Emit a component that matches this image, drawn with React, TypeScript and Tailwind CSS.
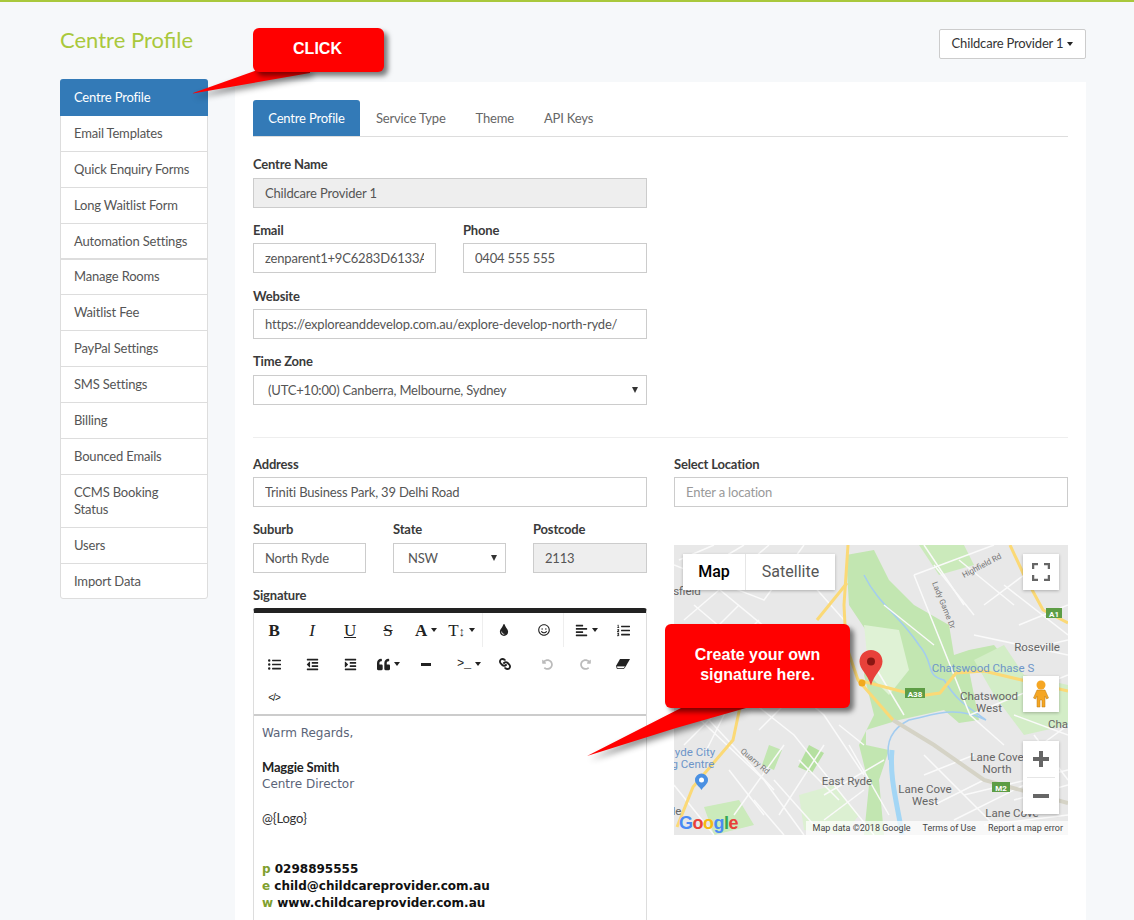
import { FaAlignLeft, FaIndent, FaLink, FaListOl, FaListUl, FaOutdent, FaQuoteLeft, FaRedoAlt, FaRegSmile, FaTint, FaUndoAlt } from "react-icons/fa";

const menuTop = ["Centre Profile", "Email Templates", "Quick Enquiry Forms", "Long Waitlist Form", "Automation Settings"];
const menuBottom = ["Manage Rooms", "Waitlist Fee", "PayPal Settings", "SMS Settings", "Billing", "Bounced Emails", "CCMS Booking Status", "Users", "Import Data"];

const Label = ({ children, low }: { children: string; low?: boolean }) => (
  <div className={`text-[13px] leading-[14px] font-bold text-[#3a3a3a] ${low ? "h-[15px] pt-[1px] mb-[6px]" : "h-[14px] mb-[7px]"}`}>{children}</div>
);

const Field = ({ value, disabled, placeholder }: { value?: string; disabled?: boolean; placeholder?: string }) => (
  <div className={`h-[30px] px-[11px] border border-[#ccc] text-[13px] leading-[28px] ${disabled ? "bg-[#eee]" : "bg-white"} ${placeholder ? "text-[#999]" : "text-[#555]"}`}>
    <div className="whitespace-nowrap overflow-hidden">{value || placeholder}</div>
  </div>
);

const Select = ({ value }: { value: string }) => (
  <div className="h-[30px] pl-[14px] pr-[8px] border border-[#ccc] bg-white text-[13px] leading-[28px] text-[#555] flex justify-between items-center">
    <span>{value}</span>
    <span className="w-0 h-0 border-x-[3.5px] border-x-transparent border-t-[6px] border-t-[#333]"></span>
  </div>
);

const Caret = () => <span className="w-0 h-0 border-x-[3.5px] border-x-transparent border-t-[4px] border-t-[#222] ml-[4px]"></span>;

const Tool = ({ children, caret, className = "w-[38px]" }: { children: React.ReactNode; caret?: boolean; className?: string }) => (
  <div className={`h-[34px] flex items-center justify-center text-[#222] ${className}`}>
    {children}
    {caret && <Caret />}
  </div>
);

const serif = "font-['Liberation_Serif',serif] text-[17px] leading-none";

const Toolbar = () => (
  <div className="h-[103px] px-[1px] border-b-2 border-[#ccc]">
    <div className="flex h-[34px]">
      <Tool><span className={`${serif} font-bold`}>B</span></Tool>
      <Tool><span className={`${serif} italic`}>I</span></Tool>
      <Tool><span className={`${serif} underline`}>U</span></Tool>
      <Tool><span className={`${serif} line-through`}>S</span></Tool>
      <Tool caret><span className={`${serif} font-bold`}>A</span></Tool>
      <Tool caret className="w-[38px] h-[30px] border-r border-[#eee] pr-[4px]"><span className={serif}>T<span className="text-[13px]">↕</span></span></Tool>
      <Tool className="w-[42px]"><FaTint size={12} /></Tool>
      <Tool className="w-[38px]"><FaRegSmile size={12} /></Tool>
      <Tool caret className="w-[46px] h-[30px] border-l border-[#eee]"><FaAlignLeft size={13} /></Tool>
      <Tool className="w-[28px]"><FaListOl size={13} /></Tool>
    </div>
    <div className="flex h-[34px]">
      <Tool><FaListUl size={13} /></Tool>
      <Tool><FaOutdent size={13} /></Tool>
      <Tool><FaIndent size={13} /></Tool>
      <Tool caret><FaQuoteLeft size={13} /></Tool>
      <Tool><span className="w-[10px] h-[3px] bg-[#222]"></span></Tool>
      <Tool caret className="w-[48px]"><span className="font-['Liberation_Mono',monospace] text-[12px] leading-none">&gt;_</span></Tool>
      <Tool className="w-[24px]"><FaLink size={12} className="rotate-90" /></Tool>
      <Tool className="w-[38px] ml-[11px] text-[#bbb]"><FaUndoAlt size={11} /></Tool>
      <Tool className="w-[38px] text-[#bbb]"><FaRedoAlt size={11} /></Tool>
      <Tool>
        <svg width="14" height="10" viewBox="0 0 14 10"><path d="M4 0h10L10 7H0Z" fill="#222" /><path d="M0.500 7h9l-1.500 2.500H1Z" fill="#fff" stroke="#222" strokeWidth="0.8" /></svg>
      </Tool>
    </div>
    <div className="flex h-[33px]">
      <Tool><span className="font-['Liberation_Sans',sans-serif] text-[10px] tracking-[-1px] leading-none">&lt;/&gt;</span></Tool>
    </div>
  </div>
);

const streets = [
  "M0 95L120 190L200 290", "M20 60L150 170L190 230", "M0 150L90 235L130 290", "M40 40L125 110", "M70 130L30 210", "M100 85L55 150",
  "M110 200L60 270", "M150 200L105 270", "M130 0L90 55L0 20", "M0 240L40 290", "M35 175L100 245", "M175 200L215 270", "M150 250L210 215",
  "M130 30L170 75", "M240 30L296 170L330 200", "M296 170L394 130", "M210 60L260 100", "M330 40L394 90", "M300 90L394 110", "M340 170L394 190",
  "M250 210L330 290", "M290 250L394 225", "M360 190L394 235", "M290 60L250 0", "M320 0L240 30", "M0 120L60 100", "M200 120L230 170", "M310 280L394 270",
  "M10 75L45 45", "M30 95L65 60", "M50 110L85 75", "M75 125L110 95", "M95 145L130 115", "M115 160L150 130", "M85 185L125 145", "M0 175L25 150", "M10 200L45 165",
  "M125 215L165 255", "M100 235L140 280", "M80 255L110 290", "M55 225L90 270", "M165 180L190 200", "M150 275L190 245", "M260 20L300 70", "M285 15L340 60",
  "M345 80L394 60", "M310 60L350 30", "M350 105L394 95", "M360 205L394 180", "M250 230L300 210", "M260 260L310 235", "M280 275L350 240", "M340 255L394 240",
  "M5 15L40 0", "M60 30L95 0", "M20 30L70 0",
];

const mapLabels: [string, number, number, string][] = [
  ["Roseville", 363, 106, "#666"], ["Chatswood Chase S", 309, 127, "#6d95c9"], ["Chatswood", 315, 155, "#666"], ["West", 315, 167, "#666"],
  ["Lane Cove", 323, 216, "#666"], ["North", 323, 228, "#666"], ["East Ryde", 173, 240, "#666"], ["Lane Cove", 251, 248, "#666"], ["West", 251, 260, "#666"],
  ["Lane Cove", 338, 272, "#666"], ["Cha", 384, 183, "#666"], ["Li", 358, 32, "#666"], ["sfield", 13, 50, "#666"], ["yde City", 21, 211, "#6d95c9"], ["g Centre", 19, 223, "#6d95c9"], ["le", 3, 270, "#666"],
];

const MapArt = () => (
  <svg className="absolute inset-0" width="394" height="290" viewBox="0 0 394 290">
    <rect width="394" height="290" fill="#e8e8e8" />
    <path d="M172 10L200 5L215 35L240 60L275 80L280 110L295 105L320 100L340 125L320 130L295 125L300 150L305 175L285 178L270 165L225 175L192 185L192 200L215 205L205 235L210 290L190 290L195 240L185 200L200 170L190 130L195 90L175 60Z" fill="#c2e6b1" />
    <path d="M245 0L290 0L300 20L265 30Z" fill="#cbeabb" />
    <path d="M190 80L225 85L235 125L215 150L195 130Z" fill="#dff2d5" />
    <path d="M300 115L330 100L350 130L394 140L394 180L350 190L320 150Z" fill="#d3edc7" />
    <path d="M135 200L150 208L138 228L124 222Z" fill="#b5e0a0" />
    <path d="M95 200L108 205L100 225L88 220Z" fill="#c2e6b1" />
    <path d="M125 250L160 240L185 270L170 290L130 285Z" fill="#dcf0d2" />
    <path d="M30 262L65 255L80 280L40 290Z" fill="#cbeabb" />
    <path d="M190 30C205 60 225 70 245 100C262 120 250 130 270 135C285 160 300 165 312 175C280 160 260 170 235 175C215 185 212 200 215 215" fill="none" stroke="#a3ccf0" strokeWidth="1.5" />
    <path d="M218 205C215 235 225 265 228 290" fill="none" stroke="#a3d6f5" strokeWidth="5" />
    {streets.map((d) => (
      <path key={d} d={d} fill="none" stroke="#fafafa" strokeWidth="1.5" />
    ))}
    <path d="M219 175L260 200L310 235L394 258" fill="none" stroke="#d5d3c6" strokeWidth="4" />
    <g fill="none" stroke="#fbd976" strokeWidth="3">
      <path d="M174 0L170 60L172 100L184 135L219 175" />
      <path d="M184 135L245 151L266 148L282 128L310 126L394 146" />
      <path d="M66 162L59 195L19 242L3 282" />
      <path d="M336 0L349 28L369 65L394 78" />
      <path d="M143 75L173 38" />
      <path d="M66 162L72 130" />
    </g>
    <rect x="231" y="143" width="20" height="10" fill="#5d9d45" />
    <text x="241" y="151.500" fontSize="8" fontWeight="700" fill="#fff" textAnchor="middle" fontFamily="Roboto, sans-serif">A38</text>
    <rect x="372" y="63" width="16" height="10" fill="#5d9d45" />
    <text x="380" y="71.500" fontSize="8" fontWeight="700" fill="#fff" textAnchor="middle" fontFamily="Roboto, sans-serif">A1</text>
    <rect x="318" y="237" width="18" height="10" fill="#5d9d45" />
    <text x="327" y="245.500" fontSize="8" fontWeight="700" fill="#fff" textAnchor="middle" fontFamily="Roboto, sans-serif">M2</text>
    {mapLabels.map(([t, x, y, c]) => (
      <text key={t + x + y} x={x} y={y} fontSize="11.5" fill={c} textAnchor="middle" fontFamily="Roboto, sans-serif">{t}</text>
    ))}
    <text x="0" y="0" fontSize="8" fill="#777" fontFamily="Roboto, sans-serif" transform="translate(290 33) rotate(-28)">Highfield Rd</text>
    <text x="0" y="0" fontSize="8" fill="#777" fontFamily="Roboto, sans-serif" transform="translate(258 38) rotate(68)">Lady Game Dr</text>
    <text x="0" y="0" fontSize="8" fill="#777" fontFamily="Roboto, sans-serif" transform="translate(66 207) rotate(40)">Quarry Rd</text>
    <circle cx="188" cy="138" r="3.500" fill="#f2a91e" />
    <path d="M21 235a6.500 6.500 0 0 1 13 0c0 4-4 6-6.500 10c-2.500-4-6.500-6-6.500-10Z" fill="#4a90e2" />
    <circle cx="27.500" cy="235" r="2.500" fill="#fff" />
    <path d="M197 105c-6.500 0-11.500 5-11.500 11.500c0 8 8 12 11.500 24c3.500-12 11.500-16 11.500-24c0-6.500-5-11.500-11.500-11.500Z" fill="#e8413a" />
    <circle cx="197" cy="116.500" r="4" fill="#8a1612" />
  </svg>
);

const MapBox = () => (
  <div className="relative w-[394px] h-[290px] overflow-hidden font-['Roboto',sans-serif] tracking-normal">
    <MapArt />
    <div className="absolute left-[9px] top-[9px] h-[36px] flex bg-white shadow-[0_1px_3px_rgba(0,0,0,0.25)] text-[16px] leading-[36px]">
      <div className="w-[63px] text-center text-black font-medium border-r border-[#e6e6e6]">Map</div>
      <div className="w-[89px] text-center text-[#565656]">Satellite</div>
    </div>
    <div className="absolute right-[9px] top-[9px] w-[36px] h-[36px] bg-white flex items-center justify-center shadow-[0_1px_3px_rgba(0,0,0,0.25)]">
      <svg width="18" height="18" viewBox="0 0 18 18" fill="none" stroke="#666" strokeWidth="2.5"><path d="M1 6V1h5M12 1h5v5M17 12v5h-5M6 17H1v-5" /></svg>
    </div>
    <div className="absolute right-[9px] top-[131px] w-[36px] h-[36px] bg-white flex items-center justify-center shadow-[0_1px_3px_rgba(0,0,0,0.25)]">
      <svg width="16" height="28" viewBox="0 0 16 28"><circle cx="8" cy="5" r="4.500" fill="#f5a623" /><path d="M4 10h8l3.500 8-2 1-1.500-3v11H9v-7H7v7H4V16l-1.500 3-2-1Z" fill="#f5a623" stroke="#b87a14" strokeWidth="0.5" /></svg>
    </div>
    <div className="absolute right-[9px] top-[196px] w-[36px] h-[73px] bg-white flex flex-col items-center shadow-[0_1px_3px_rgba(0,0,0,0.25)]">
      <div className="h-[36px] w-full flex items-center justify-center">
        <svg width="16" height="16" viewBox="0 0 16 16" fill="#666"><path d="M6 0h4v6h6v4h-6v6H6v-6H0V6h6Z" /></svg>
      </div>
      <div className="w-[28px] h-px bg-[#e6e6e6]"></div>
      <div className="h-[36px] w-full flex items-center justify-center">
        <span className="w-[16px] h-[4px] bg-[#666]"></span>
      </div>
    </div>
    <div className="absolute left-[5px] bottom-[2px] text-[18px] leading-[20px] font-bold font-['Liberation_Sans',sans-serif] tracking-[-0.5px]">
      <span className="text-[#4a8af4]">G</span><span className="text-[#e8413a]">o</span><span className="text-[#f5bb12]">o</span><span className="text-[#4a8af4]">g</span><span className="text-[#34a853]">l</span><span className="text-[#e8413a]">e</span>
    </div>
    <div className="absolute right-0 bottom-0 h-[14px] pr-[5px] pl-[7px] flex gap-[12px] bg-white/70 text-[9px] leading-[14px] text-[#444]">
      <span>Map data ©2018 Google</span>
      <span>Terms of Use</span>
      <span>Report a map error</span>
    </div>
  </div>
);

const Callout = ({ className, tail, tailClass, box, children }: { className: string; tail: string; tailClass: string; box: string; children: React.ReactNode }) => (
  <div className={`absolute ${className}`}>
    <svg className={`absolute ${tailClass} drop-shadow-[3px_4px_3px_rgba(0,0,0,0.45)]`} viewBox={box}>
      <path d={tail} fill="#ff0000" />
    </svg>
    <div className="relative w-full h-full rounded-[6px] bg-[#ff0000] shadow-[4px_4px_5px_rgba(0,0,0,0.5)] text-center text-white font-bold font-['Liberation_Sans',sans-serif] tracking-normal">
      {children}
    </div>
  </div>
);

export default function App() {
  return (
    <div className="relative h-[920px] overflow-hidden bg-[#f6f8fa] border-t-2 border-[#a9c83c] pl-[60px] pr-[48px] font-['Lato',sans-serif] tracking-[-0.18px]">
      <div className="flex justify-between items-start pt-[26px] h-[77px]">
        <h1 className="text-[22px] leading-[24px] tracking-normal text-[#a9c83c]">Centre Profile</h1>
        <button className="mt-[1px] h-[30px] w-[147px] bg-white border border-[#ccc] rounded-[2px] text-[13px] text-[#333] flex items-center justify-center">
          Childcare Provider 1<Caret />
        </button>
      </div>
      <div className="flex gap-[27px] items-start">
        <div className="w-[148px] shrink-0 rounded-[3px] bg-white text-[13px] leading-[17px] text-[#555] border border-[#ddd]">
          <div className="h-[37px] -mx-px -mt-px px-[14px] flex items-center bg-[#337ab7] text-white rounded-t-[3px]">{menuTop[0]}</div>
          {menuTop.slice(1).map((m) => (
            <div key={m} className={`h-[36px] px-[13px] flex items-center border-[#ddd] ${m === "Automation Settings" ? "border-b-2" : "border-b"}`}>{m}</div>
          ))}
          {menuBottom.map((m) => (
            <div key={m} className={`px-[13px] flex items-center border-b border-[#ddd] last:border-b-0 ${m === "CCMS Booking Status" ? "h-[53px]" : m === "Manage Rooms" ? "h-[35px] pb-[1px]" : m === "Import Data" ? "h-[34px]" : "h-[36px]"}`}>{m}</div>
          ))}
        </div>
        <div className="flex-1 mt-[3px] bg-white h-[900px] px-[18px] pt-[18px]">
          <div className="flex h-[37px] border-b border-[#ddd] text-[13px] leading-[36px] text-[#666]">
            <div className="w-[107px] h-[36px] text-center bg-[#337ab7] text-white rounded-t-[3px]">Centre Profile</div>
            <div className="ml-[16px]">Service Type</div>
            <div className="ml-[30px]">Theme</div>
            <div className="ml-[30px]">API Keys</div>
          </div>
          <div className="w-[394px] pt-[20px]">
            <Label>Centre Name</Label>
            <Field value="Childcare Provider 1" disabled />
            <div className="flex gap-[27px] mt-[14px]">
              <div className="w-[183px]">
                <Label low>Email</Label>
                <Field value="zenparent1+9C6283D6133A" />
              </div>
              <div className="w-[184px]">
                <Label low>Phone</Label>
                <Field value="0404 555 555" />
              </div>
            </div>
            <div className="mt-[15px]">
              <Label low>Website</Label>
              <Field value="https://exploreanddevelop.com.au/explore-develop-north-ryde/" />
            </div>
            <div className="mt-[15px]">
              <Label>Time Zone</Label>
              <Select value="(UTC+10:00) Canberra, Melbourne, Sydney" />
            </div>
          </div>
          <div className="h-px bg-[#eee] mt-[32px] mb-[18px]"></div>
          <div className="flex gap-[27px]">
            <div className="w-[394px] shrink-0">
              <Label low>Address</Label>
              <Field value="Triniti Business Park, 39 Delhi Road" />
              <div className="flex gap-[27px] mt-[15px]">
                <div className="w-[113px]">
                  <Label>Suburb</Label>
                  <Field value="North Ryde" />
                </div>
                <div className="w-[113px]">
                  <Label>State</Label>
                  <Select value="NSW" />
                </div>
                <div className="w-[114px]">
                  <Label>Postcode</Label>
                  <Field value="2113" disabled />
                </div>
              </div>
              <div className="mt-[14px]">
                <Label low>Signature</Label>
                <div className="border-x border-[#ddd] border-t-[5px] border-t-[#222] rounded-t-[3px] h-[320px]">
                  <Toolbar />
                  <div className="pl-[8px] pt-[9px] text-[12px] leading-[17px] text-[#5b6478] font-['DejaVu_Sans',sans-serif] tracking-normal">
                    <div>Warm Regards,</div>
                    <div className="h-[17px]"></div>
                    <div className="font-['Lato',sans-serif] font-bold text-[13px] tracking-[-0.18px] text-[#222]">Maggie Smith</div>
                    <div>Centre Director</div>
                    <div className="h-[17px]"></div>
                    <div className="font-['Lato',sans-serif] text-[13px] tracking-[-0.18px] text-[#333]">@{"{Logo}"}</div>
                    <div className="h-[34px]"></div>
                    <div className="font-bold text-[#111]"><span className="text-[#7f9f2e]">p</span> 0298895555</div>
                    <div className="font-bold text-[#111]"><span className="text-[#7f9f2e]">e</span> child@childcareprovider.com.au</div>
                    <div className="font-bold text-[#111]"><span className="text-[#7f9f2e]">w</span> www.childcareprovider.com.au</div>
                  </div>
                </div>
              </div>
            </div>
            <div className="w-[394px] shrink-0">
              <Label low>Select Location</Label>
              <Field placeholder="Enter a location" />
              <div className="mt-[38px]">
                <MapBox />
              </div>
            </div>
          </div>
        </div>
      </div>
      <Callout
        className="left-[253px] top-[26px] w-[131px] h-[44px]"
        tailClass="left-[-60px] top-[36px] w-[125px] h-[32px]"
        box="0 0 125 32"
        tail="M-3 30L70 4L117 4L117 9Z"
      >
        <div className="pt-[11px] text-[16px] leading-[20px] pr-[2px]">CLICK</div>
      </Callout>
      <Callout
        className="left-[665px] top-[622px] w-[185px] h-[84px]"
        tailClass="left-[-79px] top-[76px] w-[165px] h-[60px]"
        box="0 0 165 60"
        tail="M1 56L95 8L160 8L90 28Z"
      >
        <div className="pt-[21px] text-[16px] leading-[20px]">Create your own<br />signature here.</div>
      </Callout>
    </div>
  );
}
